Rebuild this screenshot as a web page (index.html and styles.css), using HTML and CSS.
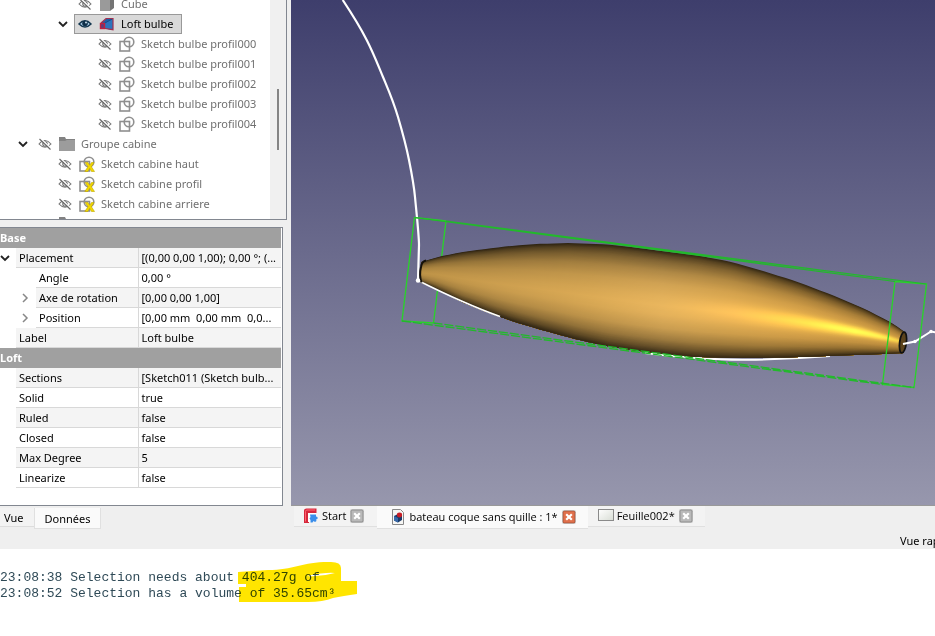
FILE: index.html
```html
<!DOCTYPE html>
<html lang="fr">
<head>
<meta charset="utf-8">
<title>bateau coque sans quille</title>
<link rel="stylesheet" href="styles.css">
</head>
<body>
<svg class="defs" aria-hidden="true">
  <symbol id="eye-off" viewBox="0 0 14 12">
    <path d="M1 6Q7 -1 13 6Q7 12.500 1 6Z" fill="none" stroke="#757575" stroke-width="1.100"/>
    <circle cx="7" cy="6" r="2.200" fill="none" stroke="#6c6c6c" stroke-width="1.100"/>
    <path d="M2.500 .5L13 10.500" stroke="#fff" stroke-width="1.600"/>
    <path d="M1.500 1L12.500 11.500" stroke="#686868" stroke-width="1.100"/>
  </symbol>
  <symbol id="eye-on" viewBox="0 0 14 12">
    <path d="M1 6Q7 -.5 13 6Q7 12 1 6Z" fill="#a9cbe6" stroke="#12364f" stroke-width="1.500"/>
    <circle cx="7" cy="5.500" r="2.800" fill="#0e2f48"/>
    <circle cx="8" cy="4.500" r=".9" fill="#d9edfb"/>
  </symbol>
  <symbol id="sketch" viewBox="0 0 16 16">
    <rect x="1" y="5.500" width="9.500" height="9.500" fill="none" stroke="#8f8f8f" stroke-width="1.600"/>
    <circle cx="10" cy="6" r="4.800" fill="none" stroke="#8f8f8f" stroke-width="1.600"/>
  </symbol>
  <symbol id="sketch-x" viewBox="0 0 16 16">
    <use href="#sketch"/>
    <path d="M6 6.500H9L10.800 9.200L12.500 6.500H15L12.400 10.700L15.500 15.500H12.500L10.700 12.400L8.800 15.500H5.800L9 10.700Z" fill="#f2d800" stroke="#bfa600" stroke-width=".6"/>
  </symbol>
  <symbol id="folder" viewBox="0 0 16 16">
    <path d="M0 1H6L7 3H16V14H0Z" fill="#828282"/>
    <path d="M0 5H6L8 4H16V15H0Z" fill="#9c9c9c"/>
  </symbol>
  <symbol id="cube" viewBox="0 0 16 16">
    <path d="M1 4L6 1H15L11 4Z" fill="#b8b8b8"/>
    <path d="M1 4H11V15H1Z" fill="#9a9a9a"/>
    <path d="M11 4L15 1V12L11 15Z" fill="#747474"/>
  </symbol>
  <symbol id="loft" viewBox="0 0 16 16">
    <path d="M2 7L7.500 2.500L14 2.500V14L6 12.500Z" fill="#1d5fa8"/>
    <path d="M6 7L14 3V14L6 12.500Z" fill="#2c74bd"/>
    <path d="M6 7L13 3" stroke="#174a86" stroke-width="1"/>
    <path d="M2 7L7 2.500H14V13.700L6 12.500" fill="none" stroke="#a03050" stroke-width="1.200"/>
    <rect x="1.500" y="7.500" width="4" height="5" fill="#5d3f7d" stroke="#c02040" stroke-width="1.400"/>
  </symbol>
  <symbol id="down" viewBox="0 0 10 8"><path d="M1 2L5 6L9 2" fill="none" stroke="#222" stroke-width="1.800"/></symbol>
  <symbol id="right" viewBox="0 0 8 10"><path d="M2 1L6 5L2 9" fill="none" stroke="#888" stroke-width="1.500"/></symbol>
  <symbol id="close" viewBox="0 0 14 14">
    <rect x=".75" y=".75" width="12.500" height="12.500" rx="1.500" fill="currentColor" stroke="#00000038" stroke-width="1.500"/>
    <path d="M4.200 4.200L9.800 9.800M9.800 4.200L4.200 9.800" stroke="#fff" stroke-width="2.200"/>
  </symbol>
</svg>

<div class="workspace">
  <aside class="side">
    <div class="tree-panel">
      <ul class="tree">
        <li class="node level-2"><span class="toggle"></span><span class="item"><svg class="eye"><use href="#eye-off"/></svg><svg class="kind"><use href="#cube"/></svg>Cube</span></li>
        <li class="node level-2"><button class="toggle" aria-label="Replier"><svg><use href="#down"/></svg></button><span class="item selected"><svg class="eye"><use href="#eye-on"/></svg><svg class="kind"><use href="#loft"/></svg>Loft bulbe</span></li>
        <li class="node level-3"><span class="toggle"></span><span class="item"><svg class="eye"><use href="#eye-off"/></svg><svg class="kind"><use href="#sketch"/></svg>Sketch bulbe profil000</span></li>
        <li class="node level-3"><span class="toggle"></span><span class="item"><svg class="eye"><use href="#eye-off"/></svg><svg class="kind"><use href="#sketch"/></svg>Sketch bulbe profil001</span></li>
        <li class="node level-3"><span class="toggle"></span><span class="item"><svg class="eye"><use href="#eye-off"/></svg><svg class="kind"><use href="#sketch"/></svg>Sketch bulbe profil002</span></li>
        <li class="node level-3"><span class="toggle"></span><span class="item"><svg class="eye"><use href="#eye-off"/></svg><svg class="kind"><use href="#sketch"/></svg>Sketch bulbe profil003</span></li>
        <li class="node level-3"><span class="toggle"></span><span class="item"><svg class="eye"><use href="#eye-off"/></svg><svg class="kind"><use href="#sketch"/></svg>Sketch bulbe profil004</span></li>
        <li class="node"><button class="toggle" aria-label="Replier"><svg><use href="#down"/></svg></button><span class="item"><svg class="eye"><use href="#eye-off"/></svg><svg class="kind"><use href="#folder"/></svg>Groupe cabine</span></li>
        <li class="node level-1"><span class="toggle"></span><span class="item"><svg class="eye"><use href="#eye-off"/></svg><svg class="kind"><use href="#sketch-x"/></svg>Sketch cabine haut</span></li>
        <li class="node level-1"><span class="toggle"></span><span class="item"><svg class="eye"><use href="#eye-off"/></svg><svg class="kind"><use href="#sketch-x"/></svg>Sketch cabine profil</span></li>
        <li class="node level-1"><span class="toggle"></span><span class="item"><svg class="eye"><use href="#eye-off"/></svg><svg class="kind"><use href="#sketch-x"/></svg>Sketch cabine arriere</span></li>
        <li class="node"><span class="toggle"></span><span class="item"><svg class="eye"></svg><svg class="kind"><use href="#folder"/></svg></span></li>
      </ul>
      <div class="scrollbar"><div class="thumb"></div></div>
    </div>

    <div class="props">
      <table>
        <colgroup><col class="col-name"><col></colgroup>
        <tbody>
        <tr class="group"><th colspan="2">Base</th></tr>
        <tr class="odd"><th><div class="name"><button class="expand" aria-label="Replier"><svg><use href="#down"/></svg></button><span>Placement</span></div></th><td>[(0,00 0,00 1,00); 0,00 °; (...</td></tr>
        <tr><th><div class="name child"><i class="expand"></i><span>Angle</span></div></th><td>0,00 °</td></tr>
        <tr class="odd"><th><div class="name child"><button class="expand" aria-label="Déplier"><svg><use href="#right"/></svg></button><span>Axe de rotation</span></div></th><td>[0,00 0,00 1,00]</td></tr>
        <tr><th><div class="name child"><button class="expand" aria-label="Déplier"><svg><use href="#right"/></svg></button><span>Position</span></div></th><td>[0,00 mm&nbsp; 0,00 mm&nbsp; 0,0...</td></tr>
        <tr class="odd"><th><div class="name"><i class="expand"></i><span>Label</span></div></th><td>Loft bulbe</td></tr>
        <tr class="group"><th colspan="2">Loft</th></tr>
        <tr class="odd"><th><div class="name"><i class="expand"></i><span>Sections</span></div></th><td>[Sketch011 (Sketch bulb...</td></tr>
        <tr><th><div class="name"><i class="expand"></i><span>Solid</span></div></th><td>true</td></tr>
        <tr class="odd"><th><div class="name"><i class="expand"></i><span>Ruled</span></div></th><td>false</td></tr>
        <tr><th><div class="name"><i class="expand"></i><span>Closed</span></div></th><td>false</td></tr>
        <tr class="odd"><th><div class="name"><i class="expand"></i><span>Max Degree</span></div></th><td>5</td></tr>
        <tr><th><div class="name"><i class="expand"></i><span>Linearize</span></div></th><td>false</td></tr>
        </tbody>
      </table>
    </div>
    <div class="side-tabs">
      <button class="side-tab">Vue</button>
      <button class="side-tab active">Données</button>
    </div>
  </aside>

  <main class="main">
    <div class="view">
      <svg class="scene" viewBox="291 0 644 505" preserveAspectRatio="xMidYMid slice" role="img" aria-label="Vue 3D du bulbe">
        <g fill="none" stroke="#fff" stroke-width="2.200">
          <path d="M342.700 0C356 20 360 27 366.700 40S378 65 383 77S393 100 398 117S406 145 409 160S414 186 415 197S419 235 419 245L418 280"/>
          <path d="M645 353C690 358.500 720 360 748 359.700S805 358 830 356" stroke-width="2"/>
        </g>
        <path d="M446 221L433.500 323" stroke="#28d428" stroke-width="1.300"/>
        <g id="bulb"></g>
        <path d="M418 280.500C440 291.500 465 304 500 316.500" fill="none" stroke="#fff" stroke-width="1.700"/>
        <path d="M426 260.500Q422 261 421 267Q419 275 421.500 282.500" fill="none" stroke="#15110a" stroke-width="2"/>
        <ellipse cx="903" cy="342.500" rx="3.400" ry="10.500" transform="rotate(7 903 342.500)" fill="#5c431c" stroke="#111" stroke-width="1.700"/>
        <circle cx="418" cy="280.500" r="2.200" fill="#fff"/>
        <path d="M903 344L915 341.500L931 331.500L936 332.500" fill="none" stroke="#fff" stroke-width="2"/>
        <circle cx="915" cy="341.500" r="1.700" fill="#fff"/>
        <circle cx="931" cy="331.500" r="1.700" fill="#fff"/>
        <g fill="none" stroke="#28d428" stroke-width="1.300">
          <path d="M446 221L414.500 217.500L402 321L433.500 323"/>
          <path d="M895 281.500L926.500 284L914 387.500L882.500 384.500Z"/>
          <path d="M414.500 217.500L895 281.500M446 221L926.500 284" stroke="#22b92b" stroke-width="1.200"/>
          <path d="M402 321L882.500 384.500M433.500 323L914 387.500" stroke="#22b92b" stroke-dasharray="9 2"/>
        </g>
      </svg>
    </div>
    <div class="doc-tabs">
      <div class="doc-tab start">
        <svg class="doc-icon" viewBox="0 0 16 16"><path d="M1 15V2.500Q1 .5 3.500 .5H13.500V5H6V15Z" fill="#d5283c"/><path d="M2.500 13.500V3.500Q2.500 2 4 2H12" stroke="#ff6672" stroke-width="1" fill="none"/><path d="M5 5H13V7H8V14H5Z" fill="#fff"/><path d="M7 6.500H13V8.500L14.500 9V11L13 11.500L13.500 13L12 14L10.500 13L9.500 14.500H7.500V12L6.500 10.500L7.500 9Z" fill="#3a8eea"/></svg>
        <span>Start</span><button class="close" aria-label="Fermer"><svg><use href="#close"/></svg></button>
      </div>
      <div class="doc-tab current">
        <svg class="doc-icon" viewBox="0 0 16 16"><path d="M2.500 .5H10.500L13.500 3.500V15.500H2.500Z" fill="#f6f6f4" stroke="#888" stroke-width="1"/><path d="M4 7L8 5L12 7V11L8 13.500L4 11.500Z" fill="#183a6a"/><path d="M4 7L8 9V13.500L4 11.500Z" fill="#3768a8"/><ellipse cx="9.500" cy="6" rx="2.600" ry="2.400" fill="#c71c24"/></svg>
        <span>bateau coque sans quille : 1*</span><button class="close hot" aria-label="Fermer"><svg><use href="#close"/></svg></button>
      </div>
      <div class="doc-tab sheet">
        <svg class="doc-icon" viewBox="0 0 16 16"><defs><linearGradient id="paper" x2="1" y2="1"><stop stop-color="#fff"/><stop offset="1" stop-color="#d8ddd5"/></linearGradient></defs><rect x=".5" y="1.500" width="15" height="11" fill="url(#paper)" stroke="#8a8a8a"/></svg>
        <span>Feuille002*</span><button class="close" aria-label="Fermer"><svg><use href="#close"/></svg></button>
      </div>
    </div>
    <div class="dock-title"><span>Vue rapport</span></div>
  </main>
</div>

<section class="console">
  <pre>23:08:38 Selection needs about 404.27g of
23:08:52 Selection has a volume of 35.65cm³</pre>
  <svg class="marker" viewBox="0 0 122 42" aria-hidden="true">
    <path d="M0 11L30 9C55 9 65 1 90 1Q103 0 103 7V20H119V33Q105 35 95 37Q85 41 70 41H1V26H8V23H0ZM69 15Q83 16 97 12Q88 11 69 15Z" fill="#ffe500" fill-rule="evenodd"/>
  </svg>
</section>
<script src="bulb.js"></script>
</body>
</html>
```
FILE: styles.css
```css
* { box-sizing: border-box; }
html, body { height: 100%; margin: 0; }
body {
  display: flex;
  flex-direction: column;
  overflow: hidden;
  background: #efefef;
  color: #000;
  font: 11px/20px "Noto Sans", "Open Sans", sans-serif;
}
svg { display: block; flex: none; }
button { border: 0; padding: 0; margin: 0; background: none; color: inherit; font: inherit; }
.defs { position: absolute; width: 0; height: 0; }

.workspace { flex: 1; min-height: 0; display: flex; }
.side { width: 291px; flex: none; display: flex; flex-direction: column; }

.tree-panel {
  flex: 1;
  min-height: 0;
  display: flex;
  width: 287px;
  overflow: hidden;
  background: #fff;
  border-right: 1px solid #828790;
  border-bottom: 1px solid #828790;
}
.tree { flex: 1; list-style: none; margin: -6px 0 0; padding: 0; color: #707070; }
.node { display: flex; height: 20px; padding-left: 18px; white-space: nowrap; }
.level-1 { padding-left: 38px; }
.level-2 { padding-left: 58px; }
.level-3 { padding-left: 78px; }
.toggle { width: 16px; flex: none; display: flex; align-items: center; }
.toggle svg { width: 10px; height: 8px; }
.item { display: flex; align-items: center; height: 20px; padding: 0 8px 0 3px; border: 1px solid transparent; line-height: 22px; }
.selected { background: #d9d9d9; border-color: #999; color: #000; }
.eye { width: 14px; height: 12px; margin-right: 7px; }
.kind { width: 16px; height: 16px; margin-right: 6px; }
.scrollbar { width: 16px; background: #f0f0f0; padding: 89px 7px 0; }
.thumb { width: 2px; height: 61px; background: #858585; }

.props {
  width: 283px;
  margin-top: 7px;
  padding: 0 1px 17px 0;
  background: #fff;
  border: 1px solid #828790;
  border-left: 0;
}
table { width: 100%; border-collapse: collapse; table-layout: fixed; }
.col-name { width: 138px; }
th, td { height: 20px; padding: 0; font-weight: 400; text-align: left; line-height: 19px; white-space: nowrap; }
td { padding-left: 3px; border-left: 1px solid #d8d8d8; border-bottom: 1px solid #d8d8d8; }
.group th { background: #a0a0a0; color: #fff; font-weight: 700; }
.name { display: flex; align-items: center; height: 20px; }
.name span { flex: 1; height: 20px; padding-left: 3px; border-bottom: 1px solid #d8d8d8; line-height: 20px; }
.odd td, .odd .name span { background: #f4f4f4; }
.expand { width: 16px; height: 19px; flex: none; display: flex; align-items: center; }
.expand svg { width: 10px; height: 10px; }
.child .expand { width: 36px; padding-left: 20px; }

.side-tabs { height: 43px; display: flex; align-items: flex-start; padding-top: 2px; }
.side-tab { height: 19px; padding: 0 10px 0 4px; line-height: 20px; background: #f3f3f3; border-bottom: 1px solid #ddd; }
.side-tab.active { height: 21px; padding: 0 10px; line-height: 22px; background: #fafafa; border: 1px solid #e0e0e0; border-top: 0; }

.main { flex: 1; min-width: 0; display: flex; flex-direction: column; }
.view { flex: 1; min-height: 0; background: linear-gradient(#3e3e6c, #9797ad); border-bottom: 1px solid #999; }
.scene { width: 100%; height: 100%; }

.doc-tabs { display: flex; align-items: flex-start; height: 24px; padding-left: 3px; font-family: "Open Sans", sans-serif; line-height: 22px; }
.doc-tab { display: flex; align-items: center; height: 21px; background: #f3f3f3; border-bottom: 1px solid #e0e0e0; white-space: nowrap; }
.doc-tab.start { padding: 0 13px 0 9px; }
.doc-tab.current { height: 23px; padding: 0 12px 0 13px; background: #fafafa; }
.doc-tab.sheet { padding: 0 12px 0 10px; }
.doc-icon { width: 16px; height: 16px; margin-right: 3px; }
.close { margin-left: 4px; color: #b9b9b9; }
.close svg { width: 14px; height: 14px; }
.close.hot { color: #e0704c; }
.dock-title { height: 19px; overflow: hidden; white-space: nowrap; line-height: 22px; display: flex; justify-content: flex-end; }
.dock-title span { width: 35px; }

.console { position: relative; flex: none; height: 87px; padding-top: 21px; background: #fff; overflow: hidden; }
.console pre { margin: 0; color: #2f4a57; font: 13px/16px "Liberation Mono", monospace; }
.marker { position: absolute; left: 238px; top: 12px; width: 122px; height: 42px; mix-blend-mode: multiply; }
```
FILE: bulb.js
```js
// Shades the hull as thin bands running from its upper to its lower outline.
const upper = [[421,262],[440,256.5],[465,251.5],[505,246.5],[535,244],[568,243],[608,244.5],[635,247.5],[665,251.5],[698,255.5],[732,262],[765,271.5],[798,282],[832,295],[865,309],[892,323],[904,331.5]];
const lower = [[421,282.5],[438,290],[462,302],[495,315],[515,322],[542,330],[575,339],[608,346.5],[635,350.5],[665,354],[698,357],[732,358],[765,358],[798,357],[838,355.5],[885,354],[904,353]];
const ramp = [[0,.2],[.04,.38],[.1,.55],[.2,.75],[.32,.89],[.45,.97],[.53,1],[.62,.97],[.75,.86],[.86,.67],[.94,.44],[1,.22]];
const base = [[421,[190,147,71]],[500,[205,159,79]],[580,[218,169,84]],[665,[235,183,94]],[740,[238,182,86]],[800,[235,177,80]],[904,[214,160,69]]];
const shine = [[421,[0,0,0]],[670,[0,0,0]],[740,[22,16,5]],[800,[50,50,0]],[850,[70,95,10]],[885,[60,75,10]],[904,[30,40,0]]];

function at(points, x) {
  let i = 1;
  while (i < points.length - 1 && points[i][0] < x) i++;
  const [x0, a] = points[i - 1], [x1, b] = points[i];
  const k = Math.min(1, Math.max(0, (x - x0) / (x1 - x0)));
  return Array.isArray(a) ? a.map((v, n) => v + (b[n] - v) * k) : a + (b - a) * k;
}

const bands = 90;
const xs = [];
for (let x = 421; x < 904; x += 7) xs.push(x);
xs.push(904);
let gradients = "", shapes = "";
for (let n = 0; n < bands; n++) {
  const t = n / bands;
  const light = at(ramp, t + 0.5 / bands);
  const glow = Math.exp(-(((t - 0.52) / 0.09) ** 2));
  let stops = "";
  for (let k = 0; k <= 20; k++) {
    const x = 421 + 483 * k / 20;
    const s = at(shine, x);
    const rgb = at(base, x).map((v, c) => Math.min(255, Math.round(v * light + s[c] * glow)));
    stops += `<stop offset="${k / 20}" stop-color="rgb(${rgb})"/>`;
  }
  gradients += `<linearGradient id="band${n}" gradientUnits="userSpaceOnUse" x1="421" x2="904" y1="0" y2="0">${stops}</linearGradient>`;
  const top = xs.map(x => `${x},${(at(upper, x) + (at(lower, x) - at(upper, x)) * t).toFixed(2)}`);
  const bottom = xs.map(x => `${x},${at(lower, x)}`).reverse();
  shapes += `<polygon points="${top.concat(bottom).join(" ")}" fill="url(#band${n})"/>`;
}
document.getElementById("bulb").innerHTML = `<defs>${gradients}</defs>${shapes}`;
```
